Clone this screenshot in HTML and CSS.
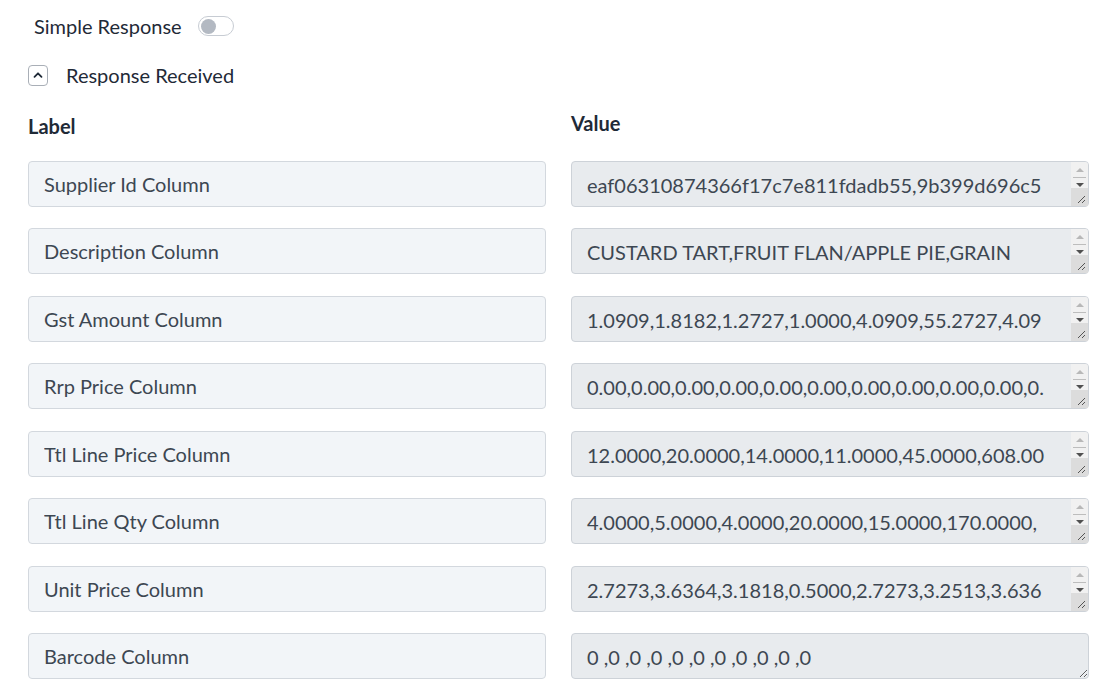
FILE: index.html
```html
<!DOCTYPE html>
<html lang="en">
<head>
  <meta charset="UTF-8" />
  <meta name="viewport" content="width=device-width, initial-scale=1" />
  <title>Response Received</title>
  <link rel="stylesheet" href="styles.css">
</head>
<body>
  <div class="panel">
    <div class="simple-row">
      <span>Simple Response</span>
      <span class="toggle"><span class="knob"></span></span>
    </div>

    <div class="section-head">
      <button class="collapse-btn" type="button">
        <svg width="12" height="12" viewBox="0 0 12 12"><path d="M2.5 7.8 L6 4.3 L9.5 7.8" fill="none" stroke="#1f2a37" stroke-width="1.8" stroke-linecap="round" stroke-linejoin="round"/></svg>
      </button>
      <span>Response Received</span>
    </div>

    <div class="fields">
      <div class="col-title">Label</div>
      <div class="col-title value-title">Value</div>

      <input class="label-box" type="text" value="Supplier Id Column" readonly />
      <div class="value-wrap">
        <textarea class="value-box" readonly>eaf06310874366f17c7e811fdadb55,9b399d696c5f,0d7e2b6a0c41f3a9e8d2,1c7a8e4f20b36d95a1e7c4f08b2d6a93,5e2f9c1a7d4b08e63f1a2c9d7e5b4a06</textarea>
        <div class="vscroll"><i class="arr up"></i><i class="thumb"></i><i class="arr down"></i><i class="corner"><svg width="12" height="12" viewBox="0 0 12 12"><path d="M11 4 L4 11 M11 8 L8 11" stroke="#555" stroke-width="1"/></svg></i></div>
      </div>

      <input class="label-box" type="text" value="Description Column" readonly />
      <div class="value-wrap">
        <textarea class="value-box words" readonly>CUSTARD TART,FRUIT FLAN/APPLE PIE,GRAIN LOAF 680G,WHITE SANDWICH 700G,FINGER BUNS 6PK,SAUSAGE ROLL</textarea>
        <div class="vscroll"><i class="arr up"></i><i class="thumb"></i><i class="arr down"></i><i class="corner"><svg width="12" height="12" viewBox="0 0 12 12"><path d="M11 4 L4 11 M11 8 L8 11" stroke="#555" stroke-width="1"/></svg></i></div>
      </div>

      <input class="label-box" type="text" value="Gst Amount Column" readonly />
      <div class="value-wrap">
        <textarea class="value-box" readonly>1.0909,1.8182,1.2727,1.0000,4.0909,55.2727,4.0909,2.1818,0.9091,3.2727,1.4545</textarea>
        <div class="vscroll"><i class="arr up"></i><i class="thumb"></i><i class="arr down"></i><i class="corner"><svg width="12" height="12" viewBox="0 0 12 12"><path d="M11 4 L4 11 M11 8 L8 11" stroke="#555" stroke-width="1"/></svg></i></div>
      </div>

      <input class="label-box" type="text" value="Rrp Price Column" readonly />
      <div class="value-wrap">
        <textarea class="value-box" readonly>0.00,0.00,0.00,0.00,0.00,0.00,0.00,0.00,0.00,0.00,0.00,0.00,0.00,0.00,0.00</textarea>
        <div class="vscroll"><i class="arr up"></i><i class="thumb"></i><i class="arr down"></i><i class="corner"><svg width="12" height="12" viewBox="0 0 12 12"><path d="M11 4 L4 11 M11 8 L8 11" stroke="#555" stroke-width="1"/></svg></i></div>
      </div>

      <input class="label-box" type="text" value="Ttl Line Price Column" readonly />
      <div class="value-wrap">
        <textarea class="value-box" readonly>12.0000,20.0000,14.0000,11.0000,45.0000,608.0000,45.0000,24.0000,10.0000</textarea>
        <div class="vscroll"><i class="arr up"></i><i class="thumb"></i><i class="arr down"></i><i class="corner"><svg width="12" height="12" viewBox="0 0 12 12"><path d="M11 4 L4 11 M11 8 L8 11" stroke="#555" stroke-width="1"/></svg></i></div>
      </div>

      <input class="label-box" type="text" value="Ttl Line Qty Column" readonly />
      <div class="value-wrap">
        <textarea class="value-box" readonly>4.0000,5.0000,4.0000,20.0000,15.0000,170.0000,15.0000,8.0000,10.0000,12.0000</textarea>
        <div class="vscroll"><i class="arr up"></i><i class="thumb"></i><i class="arr down"></i><i class="corner"><svg width="12" height="12" viewBox="0 0 12 12"><path d="M11 4 L4 11 M11 8 L8 11" stroke="#555" stroke-width="1"/></svg></i></div>
      </div>

      <input class="label-box" type="text" value="Unit Price Column" readonly />
      <div class="value-wrap">
        <textarea class="value-box" readonly>2.7273,3.6364,3.1818,0.5000,2.7273,3.2513,3.6364,2.7273,0.9091,2.4545</textarea>
        <div class="vscroll"><i class="arr up"></i><i class="thumb"></i><i class="arr down"></i><i class="corner"><svg width="12" height="12" viewBox="0 0 12 12"><path d="M11 4 L4 11 M11 8 L8 11" stroke="#555" stroke-width="1"/></svg></i></div>
      </div>

      <input class="label-box" type="text" value="Barcode Column" readonly />
      <div class="value-wrap">
        <textarea class="value-box plain" readonly>0 ,0 ,0 ,0 ,0 ,0 ,0 ,0 ,0 ,0 ,0</textarea>
      </div>
    </div>
  </div>
</body>
</html>
```

FILE: styles.css
```css
* {
  box-sizing: border-box;
}

body {
  margin: 0;
  font-family: Lato, "Open Sans", sans-serif;
  background-color: #ffffff;
  color: #1f2a37;
}

.panel {
  padding: 12px 24px 0 28px;
}

.simple-row {
  display: flex;
  align-items: center;
  gap: 16px;
  padding-left: 6px;
  height: 28px;
  font-size: 20px;
}

.toggle {
  width: 36px;
  height: 20px;
  border: 1px solid #c7ccd3;
  border-radius: 10px;
  display: flex;
  align-items: center;
  padding-left: 2px;
}

.knob {
  width: 15px;
  height: 15px;
  border-radius: 50%;
  background-color: #b3b9c2;
}

.section-head {
  display: flex;
  align-items: center;
  gap: 18px;
  margin-top: 23px;
  font-size: 20px;
}

.collapse-btn {
  width: 20px;
  height: 21px;
  padding: 0;
  border: 1px solid #a9afb7;
  border-radius: 4px;
  background: #ffffff;
  display: flex;
  align-items: center;
  justify-content: center;
}

.fields {
  display: grid;
  grid-template-columns: 518px 518px;
  column-gap: 25px;
  row-gap: 21.5px;
  margin-top: 27px;
}

.col-title {
  font-size: 20px;
  font-weight: bold;
  color: #1f2a37;
  margin-bottom: 1px;
}

.value-title {
  margin-top: -3px;
}

.label-box,
.value-box {
  height: 46px;
  width: 100%;
  margin: 0;
  font-family: Lato, "Open Sans", sans-serif;
  font-size: 20px;
  color: #3d4752;
  border-radius: 4px;
  outline: none;
}

.label-box {
  padding: 0 15px;
  background-color: #f2f5f8;
  border: 1px solid #d3d8de;
}

.value-wrap {
  position: relative;
  height: 46px;
}

.value-box {
  display: block;
  padding: 9px 42px 0 15px;
  line-height: 28px;
  background-color: #e8ebee;
  border: 1px solid #cdd2d8;
  resize: none;
  overflow: hidden;
  word-break: break-all;
}

.value-box.words {
  word-break: normal;
}

.value-box.plain {
  resize: vertical;
}

/* classic scrollbar drawn over the textarea's right edge */
.vscroll {
  position: absolute;
  top: 1px;
  right: 1px;
  bottom: 1px;
  width: 17px;
  background-color: #f1f1f1;
  border-radius: 0 3px 3px 0;
  display: flex;
  flex-direction: column;
  align-items: center;
  pointer-events: none;
}

.vscroll i {
  display: block;
}

.arr {
  width: 0;
  height: 0;
  border-left: 4px solid transparent;
  border-right: 4px solid transparent;
}

.arr.up {
  margin-top: 6px;
  border-bottom: 4px solid #b8b8b8;
}

.thumb {
  width: 13px;
  height: 1px;
  margin-top: 5px;
  background-color: #bdbdbd;
}

.arr.down {
  margin-top: 5px;
  border-top: 4px solid #505050;
}

.corner {
  margin-top: auto;
  width: 17px;
  height: 18px;
  background-color: #dcdcdc;
  display: flex !important;
  align-items: flex-end;
  justify-content: flex-end;
  padding: 0 2px 2px 0;
}
```
